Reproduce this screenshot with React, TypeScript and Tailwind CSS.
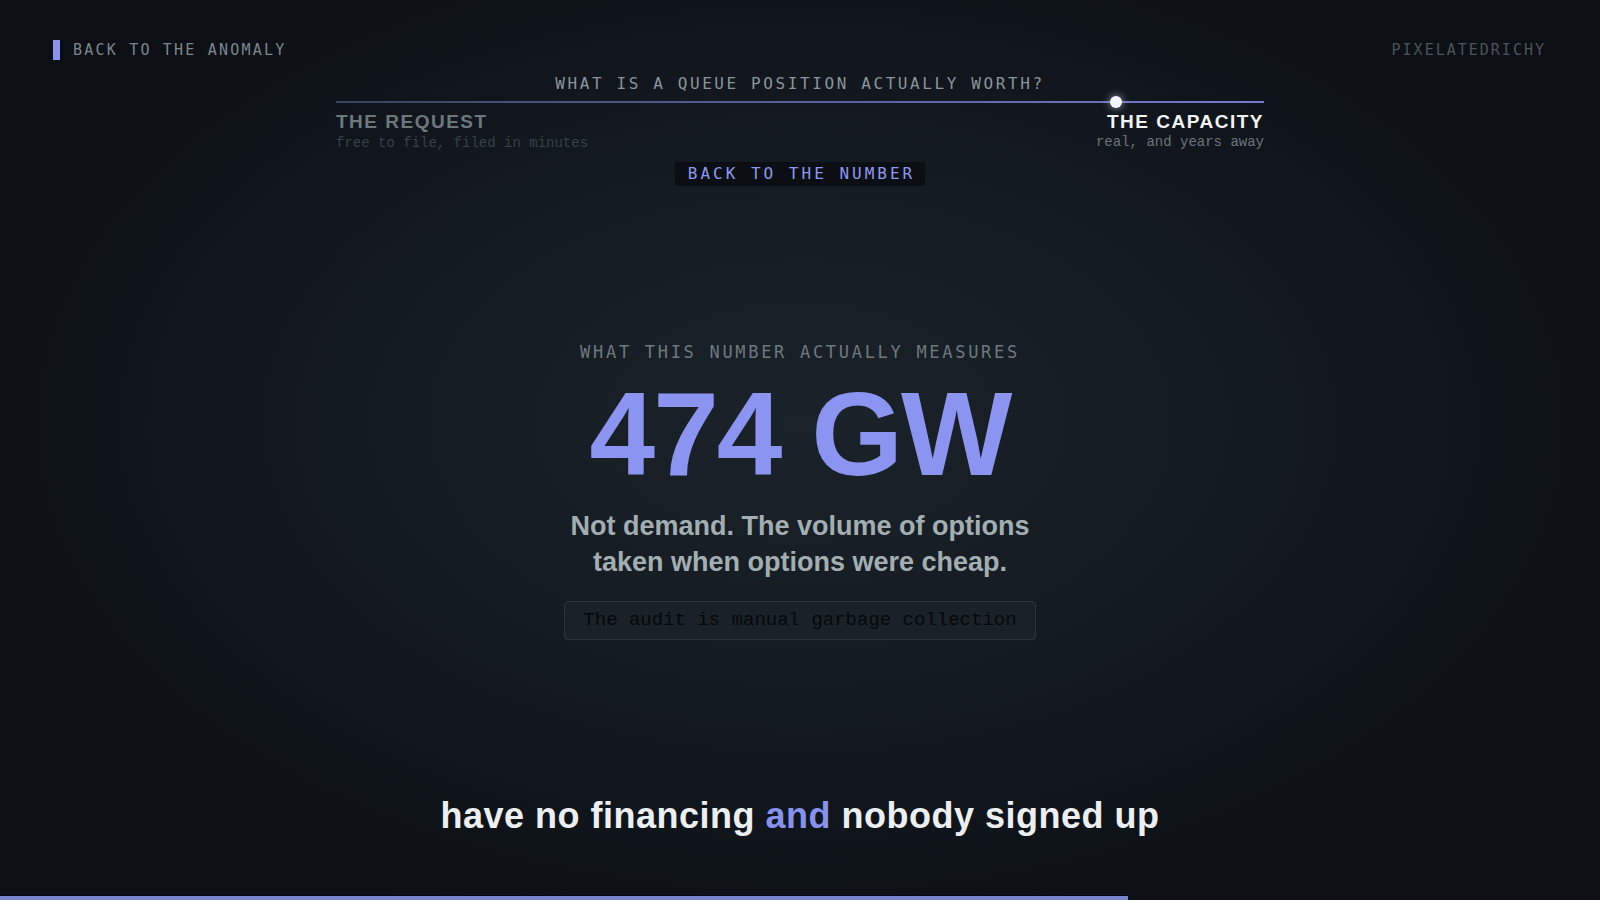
import React from 'react';

const MONO = "font-['DejaVu_Sans_Mono',monospace]";
const CODE = "font-['Liberation_Mono',monospace]";
const SANS = "font-['Liberation_Sans',Arial,sans-serif]";

// where the marker sits on the request -> capacity track
const TRACK_POSITION = 84;
// how far through the narration we are
const PROGRESS = 70.5;

function Header() {
  return (
    <div className="mt-[40px] flex h-[20px] items-center justify-between pl-[53px] pr-[54px]">
      <div className="flex items-center gap-[13px]">
        <span className="h-[20px] w-[7px] bg-[#8a94f0]" />
        <span className={`${MONO} text-[15px] leading-[20px] tracking-[2.2px] text-[#7b868c]`}>
          BACK TO THE ANOMALY
        </span>
      </div>
      <span className={`${MONO} text-[15px] leading-[20px] tracking-[2px] text-[#4a545a]`}>
        PIXELATEDRICHY
      </span>
    </div>
  );
}

function QueueTrack() {
  return (
    <div className="mx-auto w-[928px]">
      <p
        className={`${MONO} mt-[14px] text-center text-[16px] leading-[20px] tracking-[2.6px] text-[#8a959b]`}
      >
        WHAT IS A QUEUE POSITION ACTUALLY WORTH?
      </p>

      <div className="relative mt-[7px] h-[2px] w-full bg-[linear-gradient(to_right,#3a4560,#5a64a8_60%,#737ccc)]">
        <span
          className="absolute top-1/2 h-[12px] w-[12px] -translate-x-1/2 -translate-y-1/2 rounded-full bg-[#f4f6ff] shadow-[0_0_8px_rgba(220,225,255,0.7)]"
          style={{ left: `${TRACK_POSITION}%` }}
        />
      </div>

      <div className="flex justify-between">
        <div>
          <p className={`${SANS} mt-[9px] text-[19px] font-bold leading-[20px] tracking-[1.5px] text-[#6c787d]`}>
            THE REQUEST
          </p>
          <p className={`${CODE} mt-[2px] text-[14px] leading-[18px] text-[#374147]`}>
            free to file, filed in minutes
          </p>
        </div>
        <div className="text-right">
          <p className={`${SANS} mt-[9px] text-[19px] font-bold leading-[20px] tracking-[1.5px] text-[#f2f3f4]`}>
            THE CAPACITY
          </p>
          <p className={`${CODE} mt-[1px] text-[14px] leading-[18px] text-[#6b757b]`}>
            real, and years away
          </p>
        </div>
      </div>

      <div className="mt-[10px] flex justify-center">
        <span
          className={`${MONO} h-[24px] bg-[#0b0f13] pl-[13px] pr-[10px] text-[16px] leading-[24px] tracking-[3px] text-[#8e98f2]`}
        >
          BACK TO THE NUMBER
        </span>
      </div>
    </div>
  );
}

function Measure() {
  return (
    <div className="flex flex-col items-center">
      <p className={`${MONO} mt-[156px] text-[17px] leading-[20px] tracking-[2.7px] text-[#6d797f]`}>
        WHAT THIS NUMBER ACTUALLY MEASURES
      </p>
      <p className={`${SANS} mt-[13px] text-[118px] font-bold leading-[118px] tracking-[-2px] text-[#8b95f1]`}>
        474 GW
      </p>
      <p className={`${SANS} mt-[15px] text-center text-[27px] font-bold leading-[36px] text-[#a2aeb1]`}>
        Not demand. The volume of options
        <br />
        taken when options were cheap.
      </p>
      <div className="mt-[21px] h-[39px] rounded-[4px] border border-[#2c353b] bg-[#1a2228] px-[18px]">
        <span className={`${CODE} text-[19px] leading-[37px] text-[#05080a]`}>
          The audit is manual garbage collection
        </span>
      </div>
    </div>
  );
}

function Caption() {
  return (
    <p
      className={`${SANS} mt-[156px] text-center text-[36px] font-bold leading-[40px] tracking-[0.5px] text-[#eceff1]`}
    >
      have no financing <span className="text-[#8791ee]">and</span> nobody signed up
    </p>
  );
}

export default function App() {
  return (
    <div className="flex h-screen w-full flex-col overflow-hidden bg-[radial-gradient(ellipse_55%_60%_at_50%_47%,#1b232a_0%,#141b21_45%,#0c1015_100%)]">
      <Header />
      <QueueTrack />
      <Measure />
      <Caption />
      <div className="flex-1" />
      <div
        className="h-[4px] bg-[#7884cc] shadow-[0_-1px_0_#05071a]"
        style={{ width: `${PROGRESS}%` }}
      />
    </div>
  );
}
